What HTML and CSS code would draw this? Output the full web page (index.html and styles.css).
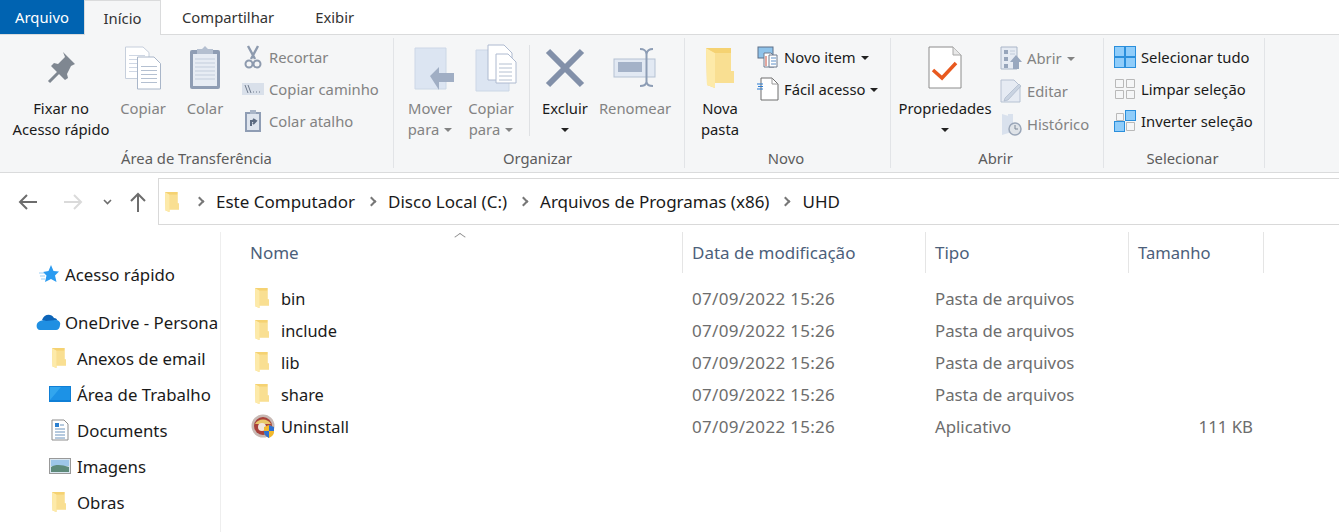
FILE: index.html
```html
<!DOCTYPE html>
<html lang="pt-BR">
<head>
    <meta charset="UTF-8">
    <meta name="viewport" content="width=device-width, initial-scale=1.0">
    <title>UHD</title>
    <link rel="stylesheet" href="styles.css">
</head>
<body>
    <svg class="defs" width="0" height="0">
        <symbol id="folder" viewBox="0 0 28 40">
            <path d="M0 0H25V23H28V35H9V40L1 37Z" fill="#f7d985"/>
            <path d="M9 5H25V23H28V35H9Z" fill="#f9df92"/>
            <path d="M0 0L9 5V40L1 37Z" fill="#fdeaa9"/>
            <path d="M0 0H25V5H9Z" fill="#f5d272"/>
        </symbol>
    </svg>

    <nav class="tabs">
        <div class="tab tab-file">Arquivo</div>
        <div class="tab tab-active">Início</div>
        <div class="tab tab-share">Compartilhar</div>
        <div class="tab">Exibir</div>
    </nav>

    <section class="ribbon">
        <div class="group group-clip">
            <div class="group-body">
                <div class="big big-pin">
                    <svg class="big-icon" width="40" height="42" viewBox="0 0 40 42">
                        <path d="M8 35L18 25" stroke="#7f8791" stroke-width="3"/>
                        <path d="M22 5L34 17L30 19L26 27L27 31L24 33L10 19L13 16L17 17L24 10Z" fill="#7f8791"/>
                    </svg>
                    <span class="text-dark">Fixar no<br>Acesso rápido</span>
                </div>
                <div class="big big-copy off">
                    <svg class="big-icon" width="36" height="43" viewBox="0 0 36 43">
                        <path d="M.5 .5H18L24 6V32H.5Z" fill="#fff" stroke="#c6cfdc"/>
                        <path d="M4 9H20M4 13H20M4 17H20M4 21H20M4 25H12" stroke="#cfd7e4"/>
                        <path d="M12.500 10.500H29L35.500 17V42.500H12.500Z" fill="#fff" stroke="#a9b6c9"/>
                        <path d="M16 20H32M16 24H32M16 28H32M16 32H32M16 36H32" stroke="#b4c0d1"/>
                    </svg>
                    <span>Copiar</span>
                </div>
                <div class="big big-paste off">
                    <svg class="big-icon" width="40" height="44" viewBox="0 0 40 44">
                        <rect x="5" y="4" width="30" height="39" rx="2" fill="#8f9db4"/>
                        <path d="M8 8H32V40H8Z" fill="#e7ecf4"/>
                        <path d="M10 13H30M10 17H30M10 21H30M10 25H30M10 29H30M10 33H30" stroke="#c3cddc"/>
                        <path d="M12 3H17L20 0L23 3H28V8H12Z" fill="#b4bfd0"/>
                    </svg>
                    <span>Colar</span>
                </div>
                <div class="small-col small-clip off">
                    <div class="small">
                        <svg width="22" height="24" viewBox="-2 0 22 24"><path d="M4 1L11 14M14 1L7 14" stroke="#8d9aae" stroke-width="2.4"/><circle cx="5" cy="19" r="3.5" fill="none" stroke="#8d9aae" stroke-width="2"/><circle cx="13" cy="19" r="3.5" fill="none" stroke="#8d9aae" stroke-width="2"/></svg>
                        <span>Recortar</span>
                    </div>
                    <div class="small">
                        <svg width="22" height="14" viewBox="0 0 22 14"><rect width="22" height="12" y="1" fill="#d9e0ea"/><path d="M3 3L6 11M6 3L9 11M11 10H12M14 10H15M17 10H18" stroke="#6f7b8d"/></svg>
                        <span>Copiar caminho</span>
                    </div>
                    <div class="small">
                        <svg width="22" height="24" viewBox="-2 0 22 24"><path d="M1 3H17V23H1Z" fill="#8f9db4"/><path d="M3 5H15V21H3Z" fill="#dfe5ee"/><path d="M6 1H12V5H6Z" fill="#a9b5c7"/><path d="M7 17V12H12M9 10L12 12L9 15" fill="none" stroke="#5c6a80" stroke-width="2"/></svg>
                        <span>Colar atalho</span>
                    </div>
                </div>
            </div>
            <div class="group-label">Área de Transferência</div>
        </div>

        <div class="group group-org">
            <div class="group-body">
                <div class="big big-move off">
                    <svg class="big-icon" width="42" height="46" viewBox="-3 0 42 46">
                        <path d="M3 3H34V44H3Z" fill="#dce5f2" stroke="#ccd7e6"/>
                        <path d="M18 31L27 22V28H42V37H27V45Z" fill="#a0aec4"/>
                    </svg>
                    <span>Mover<br>para<i class="caret caret-off"></i></span>
                </div>
                <div class="big big-copyto off">
                    <svg class="big-icon" width="48" height="48" viewBox="-8 0 48 48">
                        <path d="M1 6H34V47H1Z" fill="#dce5f2" stroke="#ccd7e6"/>
                        <path d="M13 1H29L37 9V36H13Z" fill="#fff" stroke="#aebad0"/>
                        <path d="M21 10H33L41 18V39H21Z" fill="#fff" stroke="#aebad0"/>
                        <path d="M24 20H37M24 24H37M24 28H37M24 32H37M24 36H37" stroke="#b4c0d1"/>
                    </svg>
                    <span>Copiar<br>para<i class="caret caret-off"></i></span>
                </div>
                <div class="sep"></div>
                <div class="big big-del">
                    <svg class="big-icon" width="40" height="40" viewBox="0 0 40 40">
                        <path d="M3 3L37 37M37 3L3 37" stroke="#8290a9" stroke-width="6"/>
                    </svg>
                    <span class="text-dark">Excluir<br><i class="caret caret-solo"></i></span>
                </div>
                <div class="big big-ren off">
                    <svg class="big-icon" width="44" height="40" viewBox="0 0 44 40">
                        <rect x="1" y="11" width="41" height="18" fill="#e2e9f3" stroke="#b5c1d3"/>
                        <rect x="5" y="14" width="24" height="10" fill="#a4b2c8"/>
                        <path d="M27 1C32 1 33 3 33.500 6V34C34 37 36 38 40 38M40 1C36 1 34 3 33.500 6M33.500 34C33 37 31 38 27 38" fill="none" stroke="#8d9db5" stroke-width="2"/>
                    </svg>
                    <span>Renomear</span>
                </div>
            </div>
            <div class="group-label">Organizar</div>
        </div>

        <div class="group group-new">
            <div class="group-body">
                <div class="big big-folder">
                    <svg class="big-icon" width="28" height="40"><use href="#folder"/></svg>
                    <span class="text-dark">Nova<br>pasta</span>
                </div>
                <div class="small-col small-new">
                    <div class="small">
                        <svg width="22" height="22" viewBox="0 0 22 22"><rect x="1" y="1" width="15" height="11" fill="#8fc3ea" stroke="#5d6f88"/><path d="M7 7H14L17 10V21H7Z" fill="#fff" stroke="#6e7b8e"/><path d="M12 9H20V21H12Z" fill="#fff" stroke="#6e7b8e"/><path d="M14 12H19M14 15H19M14 18H19" stroke="#5e90c8"/><path d="M9 10V20" stroke="#c84c3c"/></svg>
                        <span>Novo item<i class="caret"></i></span>
                    </div>
                    <div class="small">
                        <svg width="22" height="24" viewBox="0 0 22 24"><path d="M4 1H15L21 7V23H4Z" fill="#fff" stroke="#6e6e6e"/><path d="M15 1V7H21" fill="none" stroke="#9a9a9a"/><path d="M0 7H6M1 9.500H6M0 12H6" stroke="#2b7cd3"/></svg>
                        <span>Fácil acesso<i class="caret"></i></span>
                    </div>
                </div>
            </div>
            <div class="group-label">Novo</div>
        </div>

        <div class="group group-open">
            <div class="group-body">
                <div class="big big-props">
                    <svg class="big-icon" width="34" height="44" viewBox="0 0 34 44">
                        <path d="M1 1H25L33 9V42H1Z" fill="#fff" stroke="#8c8c8c"/>
                        <path d="M25 1V9H33" fill="#e8e8e8" stroke="#a8a8a8"/>
                        <path d="M5 24L14 32L28 17" fill="none" stroke="#e8591f" stroke-width="3.500"/>
                    </svg>
                    <span class="text-dark">Propriedades<br><i class="caret caret-solo"></i></span>
                </div>
                <div class="small-col small-open off">
                    <div class="small">
                        <svg width="22" height="24" viewBox="0 0 22 24"><path d="M1 1H17V23H1Z" fill="#e6ebf3" stroke="#aab6c8"/><path d="M4 4H8V8H4ZM4 11H8V15H4ZM4 18H8V22H4Z" fill="#97a5bb"/><path d="M10 5H15M10 8H15" stroke="#c2ccda"/><path d="M16 9L22 16H19V23H13V16H10Z" fill="#99a8bf"/></svg>
                        <span>Abrir<i class="caret caret-off"></i></span>
                    </div>
                    <div class="small">
                        <svg width="22" height="24" viewBox="0 0 22 24"><path d="M1 1H14L20 7V23H1Z" fill="#e6ebf3" stroke="#b6c1d2"/><path d="M5 19L19 5L21 7L8 21L4 22Z" fill="#c9d3e1" stroke="#a4b1c5" stroke-width=".6"/></svg>
                        <span>Editar</span>
                    </div>
                    <div class="small">
                        <svg width="22" height="24" viewBox="0 0 22 24"><path d="M2 2L12 5V20L2 23Z" fill="#d9e1ed"/><path d="M8 2H13V12H8Z" fill="#d9e1ed"/><circle cx="15" cy="17" r="6" fill="#dfe3e8" stroke="#9aa6b8" stroke-width="1.500"/><path d="M15 13V17H18" fill="none" stroke="#7a8696"/></svg>
                        <span>Histórico</span>
                    </div>
                </div>
            </div>
            <div class="group-label">Abrir</div>
        </div>

        <div class="group group-select">
            <div class="group-body">
                <div class="small-col small-select">
                    <div class="small">
                        <svg width="22" height="22" viewBox="0 0 22 22"><rect x=".5" y=".5" width="21" height="21" fill="#90cdfa" stroke="#2a8fdc"/><path d="M11 0V22M0 11H22" stroke="#2a8fdc" stroke-width="2"/></svg>
                        <span>Selecionar tudo</span>
                    </div>
                    <div class="small">
                        <svg width="22" height="22" viewBox="0 0 22 22"><path d="M1.500 1.500H9.500V9.500H1.500ZM12.500 1.500H20.500V9.500H12.500ZM1.500 12.500H9.500V20.500H1.500ZM12.500 12.500H20.500V20.500H12.500Z" fill="none" stroke="#b9b9b9"/></svg>
                        <span>Limpar seleção</span>
                    </div>
                    <div class="small">
                        <svg width="22" height="22" viewBox="0 0 22 22"><path d="M2.500 3.500H9.500V10.500H2.500ZM12.500 12.500H20.500V20.500H12.500Z" fill="none" stroke="#b9b9b9"/><rect x="11.500" y=".5" width="10" height="10" fill="#90cdfa" stroke="#2a8fdc"/><rect x=".5" y="11.500" width="10" height="10" fill="#90cdfa" stroke="#2a8fdc"/></svg>
                        <span>Inverter seleção</span>
                    </div>
                </div>
            </div>
            <div class="group-label">Selecionar</div>
        </div>
    </section>

    <section class="address-row">
        <div class="nav-buttons">
            <svg width="20" height="16" viewBox="0 0 20 16"><path d="M19 8H2M9 1L2 8L9 15" fill="none" stroke="#6d6d6d" stroke-width="2"/></svg>
            <svg width="20" height="16" viewBox="0 0 20 16"><path d="M1 8H18M11 1L18 8L11 15" fill="none" stroke="#dadada" stroke-width="2"/></svg>
            <svg width="9" height="6" viewBox="0 0 9 6"><path d="M1 1L4.500 4.500L8 1" fill="none" stroke="#6d6d6d" stroke-width="1.600"/></svg>
            <svg width="16" height="20" viewBox="0 0 16 20"><path d="M8 20V2M1 9L8 2L15 9" fill="none" stroke="#6d6d6d" stroke-width="2"/></svg>
        </div>
        <div class="address-bar">
            <svg width="14" height="20"><use href="#folder"/></svg>
            <i class="chev"></i><span>Este Computador</span>
            <i class="chev"></i><span>Disco Local (C:)</span>
            <i class="chev"></i><span>Arquivos de Programas (x86)</span>
            <i class="chev"></i><span>UHD</span>
        </div>
    </section>

    <main class="content">
        <aside class="tree">
            <div class="tree-item tree-top">
                <svg width="20" height="19" viewBox="0 0 20 19"><path d="M12 0L14.500 6L20 6.500L16 10.500L17.500 17L12 14L6 17L7.500 10.500L4 7L9.500 6Z" fill="#2b9bf0"/><path d="M0 8H5M1 11H6M2 14H6" stroke="#9ccff5"/></svg>
                <span>Acesso rápido</span>
            </div>
            <div class="tree-item tree-top tree-drive">
                <svg width="25" height="16" viewBox="0 0 25 16"><path d="M6 6C8 0 15 -1 18 4C20 4 21 5 21 6L11 9Z" fill="#0c64b8"/><path d="M4 7C6 6 9 6 10 7L20 6C23 6 25 9 24 11C24 14 22 16 20 16H4C0 16 -1 9 4 7Z" fill="#1f8fe2"/></svg>
                <span>OneDrive - Persona</span>
            </div>
            <div class="tree-item tree-sub">
                <svg class="ico-folder" width="14" height="20"><use href="#folder"/></svg>
                <span>Anexos de email</span>
            </div>
            <div class="tree-item tree-sub">
                <svg width="22" height="16" viewBox="0 0 22 16"><rect width="22" height="16" fill="#0f7fd6"/><path d="M1 1H21V14H1Z" fill="#32a6ee"/><path d="M1 14L12 1H21V14Z" fill="#1c92e6"/></svg>
                <span>Área de Trabalho</span>
            </div>
            <div class="tree-item tree-sub">
                <svg class="ico-doc" width="18" height="22" viewBox="0 0 18 22"><path d="M1 1H13L17 5V21H1Z" fill="#fff" stroke="#8d8d8d"/><path d="M4 4H8V8H4Z" fill="#2a7fd0"/><path d="M9 6H13M4 10H14M4 13H14M4 16H14M4 19H14" stroke="#6d94bd"/></svg>
                <span>Documents</span>
            </div>
            <div class="tree-item tree-sub">
                <svg width="22" height="16" viewBox="0 0 22 16"><rect x=".5" y=".5" width="21" height="15" fill="#d8e6f0" stroke="#999"/><rect x="2" y="2" width="18" height="6" fill="#9dc6e8"/><path d="M2 9C7 6 13 7 20 9V14H2Z" fill="#5d8a7a"/></svg>
                <span>Imagens</span>
            </div>
            <div class="tree-item tree-sub">
                <svg class="ico-folder" width="14" height="20"><use href="#folder"/></svg>
                <span>Obras</span>
            </div>
        </aside>

        <div class="files">
            <div class="sort-arrow"></div>
            <div class="file-row file-head">
                <div class="col-name">Nome</div>
                <div class="col-date">Data de modificação</div>
                <div class="col-type">Tipo</div>
                <div class="col-size">Tamanho</div>
            </div>
            <div class="file-list">
                <div class="file-row">
                    <div class="col-name"><svg class="ico-folder" width="14" height="20"><use href="#folder"/></svg>bin</div>
                    <div class="col-date">07/09/2022 15:26</div>
                    <div class="col-type">Pasta de arquivos</div>
                    <div class="col-size"></div>
                </div>
                <div class="file-row">
                    <div class="col-name"><svg class="ico-folder" width="14" height="20"><use href="#folder"/></svg>include</div>
                    <div class="col-date">07/09/2022 15:26</div>
                    <div class="col-type">Pasta de arquivos</div>
                    <div class="col-size"></div>
                </div>
                <div class="file-row">
                    <div class="col-name"><svg class="ico-folder" width="14" height="20"><use href="#folder"/></svg>lib</div>
                    <div class="col-date">07/09/2022 15:26</div>
                    <div class="col-type">Pasta de arquivos</div>
                    <div class="col-size"></div>
                </div>
                <div class="file-row">
                    <div class="col-name"><svg class="ico-folder" width="14" height="20"><use href="#folder"/></svg>share</div>
                    <div class="col-date">07/09/2022 15:26</div>
                    <div class="col-type">Pasta de arquivos</div>
                    <div class="col-size"></div>
                </div>
                <div class="file-row">
                    <div class="col-name">
                        <svg class="ico-app" width="24" height="24" viewBox="0 0 24 24"><circle cx="12" cy="12" r="11.500" fill="#c8b9b4"/><circle cx="12" cy="12" r="9" fill="#a8413a"/><path d="M4 10C7 4 17 4 20 10Z" fill="#e8c66a"/><circle cx="11" cy="13" r="4" fill="#f0e6dc"/><path d="M13 13L18 11L23 13V18C23 21 20 23 18 24C16 23 13 21 13 18Z" fill="#f1b82d"/><path d="M18 11V17H13V18C13 21 16 23 18 24V17H23V13Z" fill="#2f6fd0"/></svg>
                        Uninstall
                    </div>
                    <div class="col-date">07/09/2022 15:26</div>
                    <div class="col-type">Aplicativo</div>
                    <div class="col-size">111 KB</div>
                </div>
            </div>
        </div>
    </main>
</body>
</html>
```

FILE: styles.css
```css
* {
    box-sizing: border-box;
}
html, body {
    height: 100%;
}
body {
    margin: 0;
    overflow: hidden;
    background: #fff;
    color: #1a1a1a;
    font-family: "Noto Sans", sans-serif;
    font-size: 17px;
}
.defs {
    position: absolute;
}
svg {
    display: block;
    flex: none;
}

/* tabs */
.tabs {
    display: flex;
    height: 35px;
    border-bottom: 1px solid #dadbdc;
    font-size: 14.8px;
    color: #333;
}
.tab {
    padding: 0 13px;
    line-height: 34px;
}
.tab-file {
    width: 84px;
    height: 34px;
    padding: 0;
    background: #0063b1;
    color: #fff;
    text-align: center;
}
.tab-active {
    width: 77px;
    height: 35px;
    padding: 0;
    background: #f5f6f7;
    border: 1px solid #dadbdc;
    border-bottom: 0;
    text-align: center;
}
.tab-share {
    margin-left: 8px;
    padding-right: 28px;
}

/* ribbon */
.ribbon {
    display: flex;
    height: 138px;
    padding-top: 3px;
    background: #f5f6f7;
    border-bottom: 1px solid #dadbdc;
    font-size: 14.8px;
}
.group {
    display: flex;
    flex-direction: column;
    height: 130px;
    border-right: 1px solid #e2e4e7;
}
.group-clip { width: 394px; }
.group-org { width: 291px; }
.group-new { width: 206px; }
.group-open { width: 213px; }
.group-select { width: 161px; }
.group-body {
    display: flex;
    height: 109px;
}
.group-label {
    height: 21px;
    padding-right: 3px;
    text-align: center;
    color: #5c5c5c;
    line-height: 22px;
}
.group-clip .group-label {
    padding-right: 0;
}
.big {
    display: flex;
    flex-direction: column;
    align-items: center;
    padding-top: 6px;
    text-align: center;
    line-height: 21px;
    color: #1a1a1a;
}
.big-icon {
    height: 48px;
    margin-bottom: 6px;
    overflow: visible;
}
.big-pin { width: 122px; }
.big-copy { width: 62px; margin-left: -10px; }
.big-paste { width: 62px; }
.big-move { width: 72px; }
.big-copyto { width: 62px; margin-left: -6px; }
.big-del { width: 70px; }
.big-ren { width: 70px; }
.big-folder { width: 70px; }
.big-props { width: 108px; }
.off, .off span {
    color: #838383;
}
.text-dark {
    color: #1a1a1a;
}
.sep {
    width: 1px;
    height: 91px;
    margin: 7px 0 0 7px;
    background: #dfe1e4;
}
.small-col {
    display: flex;
    flex-direction: column;
    gap: 8px;
    padding-top: 7px;
}
.small {
    display: flex;
    align-items: center;
    gap: 5px;
    height: 24px;
    white-space: nowrap;
}
.small-clip { margin-left: 6px; }
.small-new { margin-left: 2px; }
.small-open { margin-left: 1px; gap: 9px; padding-top: 8px; }
.small-select { margin-left: 10px; }
.caret {
    display: inline-block;
    width: 0;
    height: 0;
    margin: 0 0 3px 5px;
    border-top: 4px solid #222;
    border-left: 4px solid transparent;
    border-right: 4px solid transparent;
    vertical-align: middle;
}
.caret-off {
    border-top-color: #838383;
}
.caret-solo {
    margin-left: 0;
}

/* address */
.address-row {
    display: flex;
    height: 59px;
    padding-top: 5px;
}
.nav-buttons {
    display: flex;
    align-items: center;
    width: 158px;
    height: 47px;
    padding-left: 18px;
}
.nav-buttons svg:nth-child(2) { margin-left: 25px; }
.nav-buttons svg:nth-child(3) { margin-left: 20px; }
.nav-buttons svg:nth-child(4) { margin-left: 18px; }
.address-bar {
    display: flex;
    align-items: center;
    flex: 1;
    height: 47px;
    padding-left: 6px;
    border: 1px solid #d9d9d9;
    border-right: 0;
    color: #1a1a1a;
    white-space: nowrap;
}
.chev {
    width: 7px;
    height: 7px;
    margin: 0 13px;
    border-top: 2.5px solid #777;
    border-right: 2.5px solid #777;
    transform: rotate(45deg);
}
.address-bar svg + .chev {
    margin-left: 17px;
}

/* main */
.content {
    display: flex;
    height: 300px;
}
.tree {
    width: 221px;
    padding-top: 24px;
    border-right: 1px solid #eeeeee;
    font-size: 16.8px;
    overflow: hidden;
}
.tree-item {
    display: flex;
    align-items: center;
    height: 36px;
    white-space: nowrap;
}
.tree-top {
    padding-left: 39px;
}
.tree-drive {
    margin-top: 12px;
    padding-left: 36px;
}
.tree-top svg {
    margin-right: 6px;
}
.tree-drive svg {
    margin-right: 4px;
}
.tree-sub {
    padding-left: 49px;
}
.tree-sub svg {
    margin-right: 6px;
}
.tree-sub .ico-folder {
    margin-left: 3px;
    margin-right: 11px;
}
.tree-sub .ico-doc {
    margin-left: 2px;
    margin-right: 8px;
}
.files {
    position: relative;
    flex: 1;
}
.sort-arrow {
    position: absolute;
    left: 235px;
    top: 1px;
    width: 8px;
    height: 8px;
    border-top: 1px solid #8a8a8a;
    border-left: 1px solid #8a8a8a;
    transform: scaleY(.7) rotate(45deg);
}
.file-row {
    display: flex;
    height: 32px;
    align-items: center;
    white-space: nowrap;
}
.file-head {
    height: 41px;
    color: #4c607a;
}
.file-head > div {
    display: flex;
    align-items: center;
    height: 41px;
    padding-bottom: 1px;
    border-right: 1px solid #e5e5e5;
}
.file-head .col-size {
    font-size: 16.6px;
}
.file-list {
    padding-top: 9px;
}
.file-list .col-date {
    letter-spacing: .3px;
    color: #6d6d6d;
}
.file-list .col-type,
.file-list .col-size {
    font-size: 16.8px;
    color: #6d6d6d;
}
.file-list .col-name {
    font-size: 16.4px;
}
.col-name {
    display: flex;
    align-items: center;
    width: 462px;
    padding-left: 29px;
    gap: 12px;
}
.col-name .ico-folder {
    margin-left: 5px;
}
.col-name .ico-app {
    margin-left: 1px;
    margin-right: -6px;
}
.col-date {
    width: 243px;
    padding-left: 9px;
}
.col-type {
    width: 203px;
    padding-left: 9px;
}
.col-size {
    width: 135px;
    padding-left: 9px;
}
.file-list .col-size {
    padding-right: 11px;
    text-align: right;
}
```
